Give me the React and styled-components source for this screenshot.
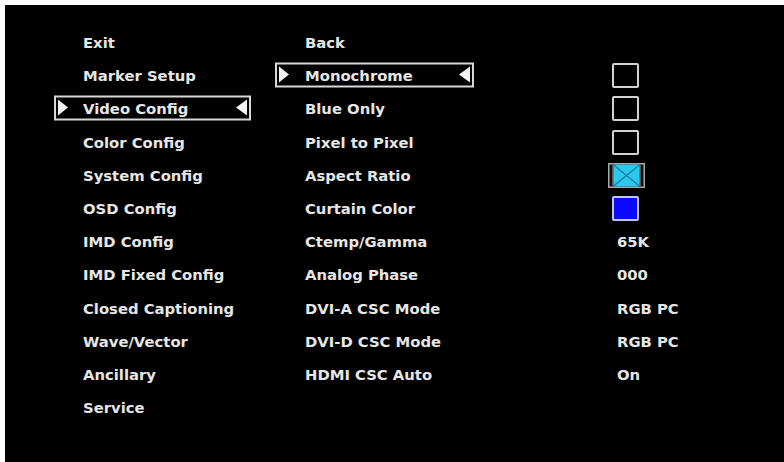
import React from "react";
import styled, { createGlobalStyle } from "styled-components";

const Global = createGlobalStyle`
  html, body { margin: 0; padding: 0; background: #ffffff; }
  body { width: 784px; height: 462px; overflow: hidden; }
`;

const Screen = styled.div`
  margin: 5px 0 0 5px;
  width: 779px;
  height: 457px;
  background: #000;
  box-sizing: border-box;
  padding: 21px 0 0 49px;
  display: flex;
  font-family: "DejaVu Sans", Verdana, sans-serif;
  font-weight: bold;
  font-size: 14.8px;
  color: #e6e6e6;
`;

const Column = styled.div`
  display: flex;
  flex-direction: column;
  width: ${(p) => p.$width}px;
  margin-left: ${(p) => p.$offset || 0}px;
`;

const Item = styled.div`
  position: relative;
  height: 33.2px;
  display: flex;
  align-items: center;
  box-sizing: border-box;
  padding-left: ${(p) => p.$pad}px;
  white-space: nowrap;
`;

const Highlight = styled.div`
  position: absolute;
  left: 0;
  right: 0;
  top: 50%;
  height: 25px;
  transform: translateY(-54%);
  border: 2px solid #d8d8d8;
  box-sizing: border-box;
  pointer-events: none;
`;

const Arrow = styled.div`
  position: absolute;
  top: 50%;
  transform: translateY(-50%);
  width: 0;
  height: 0;
  border-top: 8px solid transparent;
  border-bottom: 8px solid transparent;
  ${(p) =>
    p.$dir === "right"
      ? `left: 2px; border-left: 10px solid #f2f2f2;`
      : `right: 2px; border-right: 11px solid #f2f2f2;`}
`;

const Label = styled.span`
  position: relative;
`;

const Check = styled.div`
  width: 27px;
  height: 25px;
  box-sizing: border-box;
  border: 2px solid #d2d2d2;
  border-radius: 2px;
  margin-left: 4px;
  background: ${(p) => p.$fill || "transparent"};
  ${(p) => p.$fill && `border-color: #c4c4e4;`}
`;

const Value = styled.span`
  padding-left: 9px;
`;

function MenuItem({ label, selected, pad }) {
  return (
    <Item $pad={pad}>
      {selected && (
        <Highlight>
          <Arrow $dir="right" />
          <Arrow $dir="left" />
        </Highlight>
      )}
      <Label>{label}</Label>
    </Item>
  );
}

const AspectIcon = () => (
  <svg width="37" height="25" viewBox="0 0 37 25">
    <rect x="0.75" y="0.75" width="35.5" height="23.5" fill="#111" stroke="#a8a8a8" strokeWidth="1.5" />
    <rect x="5" y="1.5" width="27" height="22" fill="#2cc8ee" />
    <line x1="5" y1="1.5" x2="32" y2="23.5" stroke="#1a7fa6" strokeWidth="1.3" />
    <line x1="32" y1="1.5" x2="5" y2="23.5" stroke="#1a7fa6" strokeWidth="1.3" />
    <rect x="4" y="1.5" width="1.5" height="22" fill="#555" />
    <rect x="31.5" y="1.5" width="1.5" height="22" fill="#555" />
  </svg>
);

const left = [
  "Exit",
  "Marker Setup",
  "Video Config",
  "Color Config",
  "System Config",
  "OSD Config",
  "IMD Config",
  "IMD Fixed Config",
  "Closed Captioning",
  "Wave/Vector",
  "Ancillary",
  "Service",
];

const middle = [
  "Back",
  "Monochrome",
  "Blue Only",
  "Pixel to Pixel",
  "Aspect Ratio",
  "Curtain Color",
  "Ctemp/Gamma",
  "Analog Phase",
  "DVI-A CSC Mode",
  "DVI-D CSC Mode",
  "HDMI CSC Auto",
];

export default function App() {
  return (
    <>
      <Global />
      <Screen>
        <Column $width={197}>
          {left.map((l) => (
            <MenuItem key={l} label={l} pad={29} selected={l === "Video Config"} />
          ))}
        </Column>
        <Column $width={199} $offset={24}>
          {middle.map((l) => (
            <MenuItem key={l} label={l} pad={30} selected={l === "Monochrome"} />
          ))}
        </Column>
        <Column $width={120} $offset={134}>
          <Item $pad={0} />
          <Item $pad={0}><Check /></Item>
          <Item $pad={0}><Check /></Item>
          <Item $pad={0}><Check /></Item>
          <Item $pad={0}><AspectIcon /></Item>
          <Item $pad={0}><Check $fill="#0a0aff" /></Item>
          <Item $pad={0}><Value>65K</Value></Item>
          <Item $pad={0}><Value>000</Value></Item>
          <Item $pad={0}><Value>RGB PC</Value></Item>
          <Item $pad={0}><Value>RGB PC</Value></Item>
          <Item $pad={0}><Value>On</Value></Item>
        </Column>
      </Screen>
    </>
  );
}
